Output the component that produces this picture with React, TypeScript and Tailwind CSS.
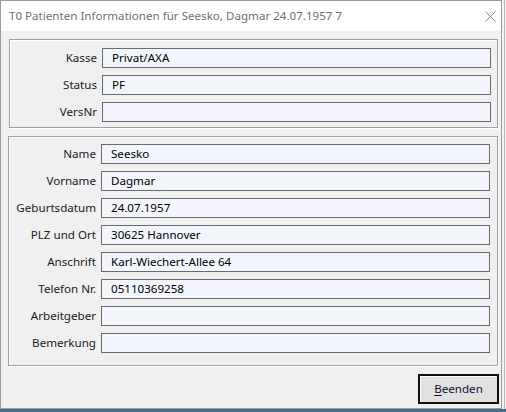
import React from "react";

type Field = { label: string; value: string };

const KASSE: Field[] = [
  { label: "Kasse", value: "Privat/AXA" },
  { label: "Status", value: "PF" },
  { label: "VersNr", value: "" },
];

const PERSON: Field[] = [
  { label: "Name", value: "Seesko" },
  { label: "Vorname", value: "Dagmar" },
  { label: "Geburtsdatum", value: "24.07.1957" },
  { label: "PLZ und Ort", value: "30625 Hannover" },
  { label: "Anschrift", value: "Karl-Wiechert-Allee 64" },
  { label: "Telefon Nr.", value: "05110369258" },
  { label: "Arbeitgeber", value: "" },
  { label: "Bemerkung", value: "" },
];

function Row({ label, value }: Field) {
  return (
    <div className="flex h-[20px] items-center">
      <div className="w-[92px] shrink-0 pr-[5px] text-right text-[#1a1a24]">{label}</div>
      <div className="flex h-[20px] w-[389px] items-center border border-[#6b6b6b] bg-[#f2f6fc] pl-[9px] text-black">
        {value}
      </div>
    </div>
  );
}

// etched group box like the Win32 GROUPBOX without caption
function Group({ fields, className }: { fields: Field[]; className: string }) {
  return (
    <div
      className={`flex flex-col gap-[7px] border border-[#a0a0a0] shadow-[inset_1px_1px_0_#ffffff,1px_1px_0_#ffffff] ${className}`}
    >
      {fields.map((f) => (
        <Row key={f.label} {...f} />
      ))}
    </div>
  );
}

export default function App() {
  return (
    <div
      className="relative h-[412px] w-[506px] overflow-hidden bg-[#f4f4f4] text-[11.6px] leading-none"
      style={{ fontFamily: '"Noto Sans", "Open Sans", sans-serif' }}
    >
      <div className="flex h-[409px] w-[502px] flex-col border border-[#9c9c9c] bg-[#f0f0f0]">
        <div className="flex h-[30px] shrink-0 items-center justify-between bg-white pl-[8px] pr-[5px]">
          <span className="text-[#707070]">T0 Patienten Informationen für Seesko, Dagmar 24.07.1957 7</span>
          <svg width="11" height="11" viewBox="0 0 11 11">
            <path d="M0.5 0.5 L10.5 10.5 M10.5 0.5 L0.5 10.5" stroke="#8a8a8a" strokeWidth="1" fill="none" />
          </svg>
        </div>

        <div className="flex flex-col pt-[8px]">
          <Group fields={KASSE} className="ml-[8px] w-[489px] pb-[5px] pt-[8px]" />
          <Group fields={PERSON} className="ml-[7px] mt-[8px] w-[490px] pb-[12px] pt-[7px]" />
          <div className="mt-[8px] flex justify-end pr-[2px]">
            <button
              type="button"
              className="h-[30px] w-[81px] border-2 border-[#111111] bg-[#e1e1e1] text-[#10103a] shadow-[inset_1px_1px_0_#ffffff]"
            >
              <span className="underline underline-offset-2">B</span>eenden
            </button>
          </div>
        </div>
      </div>
      <div className="absolute bottom-0 left-0 h-[3px] w-full bg-[#3d6f96]" />
      <div className="absolute right-[1px] top-0 h-[409px] w-[1px] bg-[#b4b4b4]" />
    </div>
  );
}
